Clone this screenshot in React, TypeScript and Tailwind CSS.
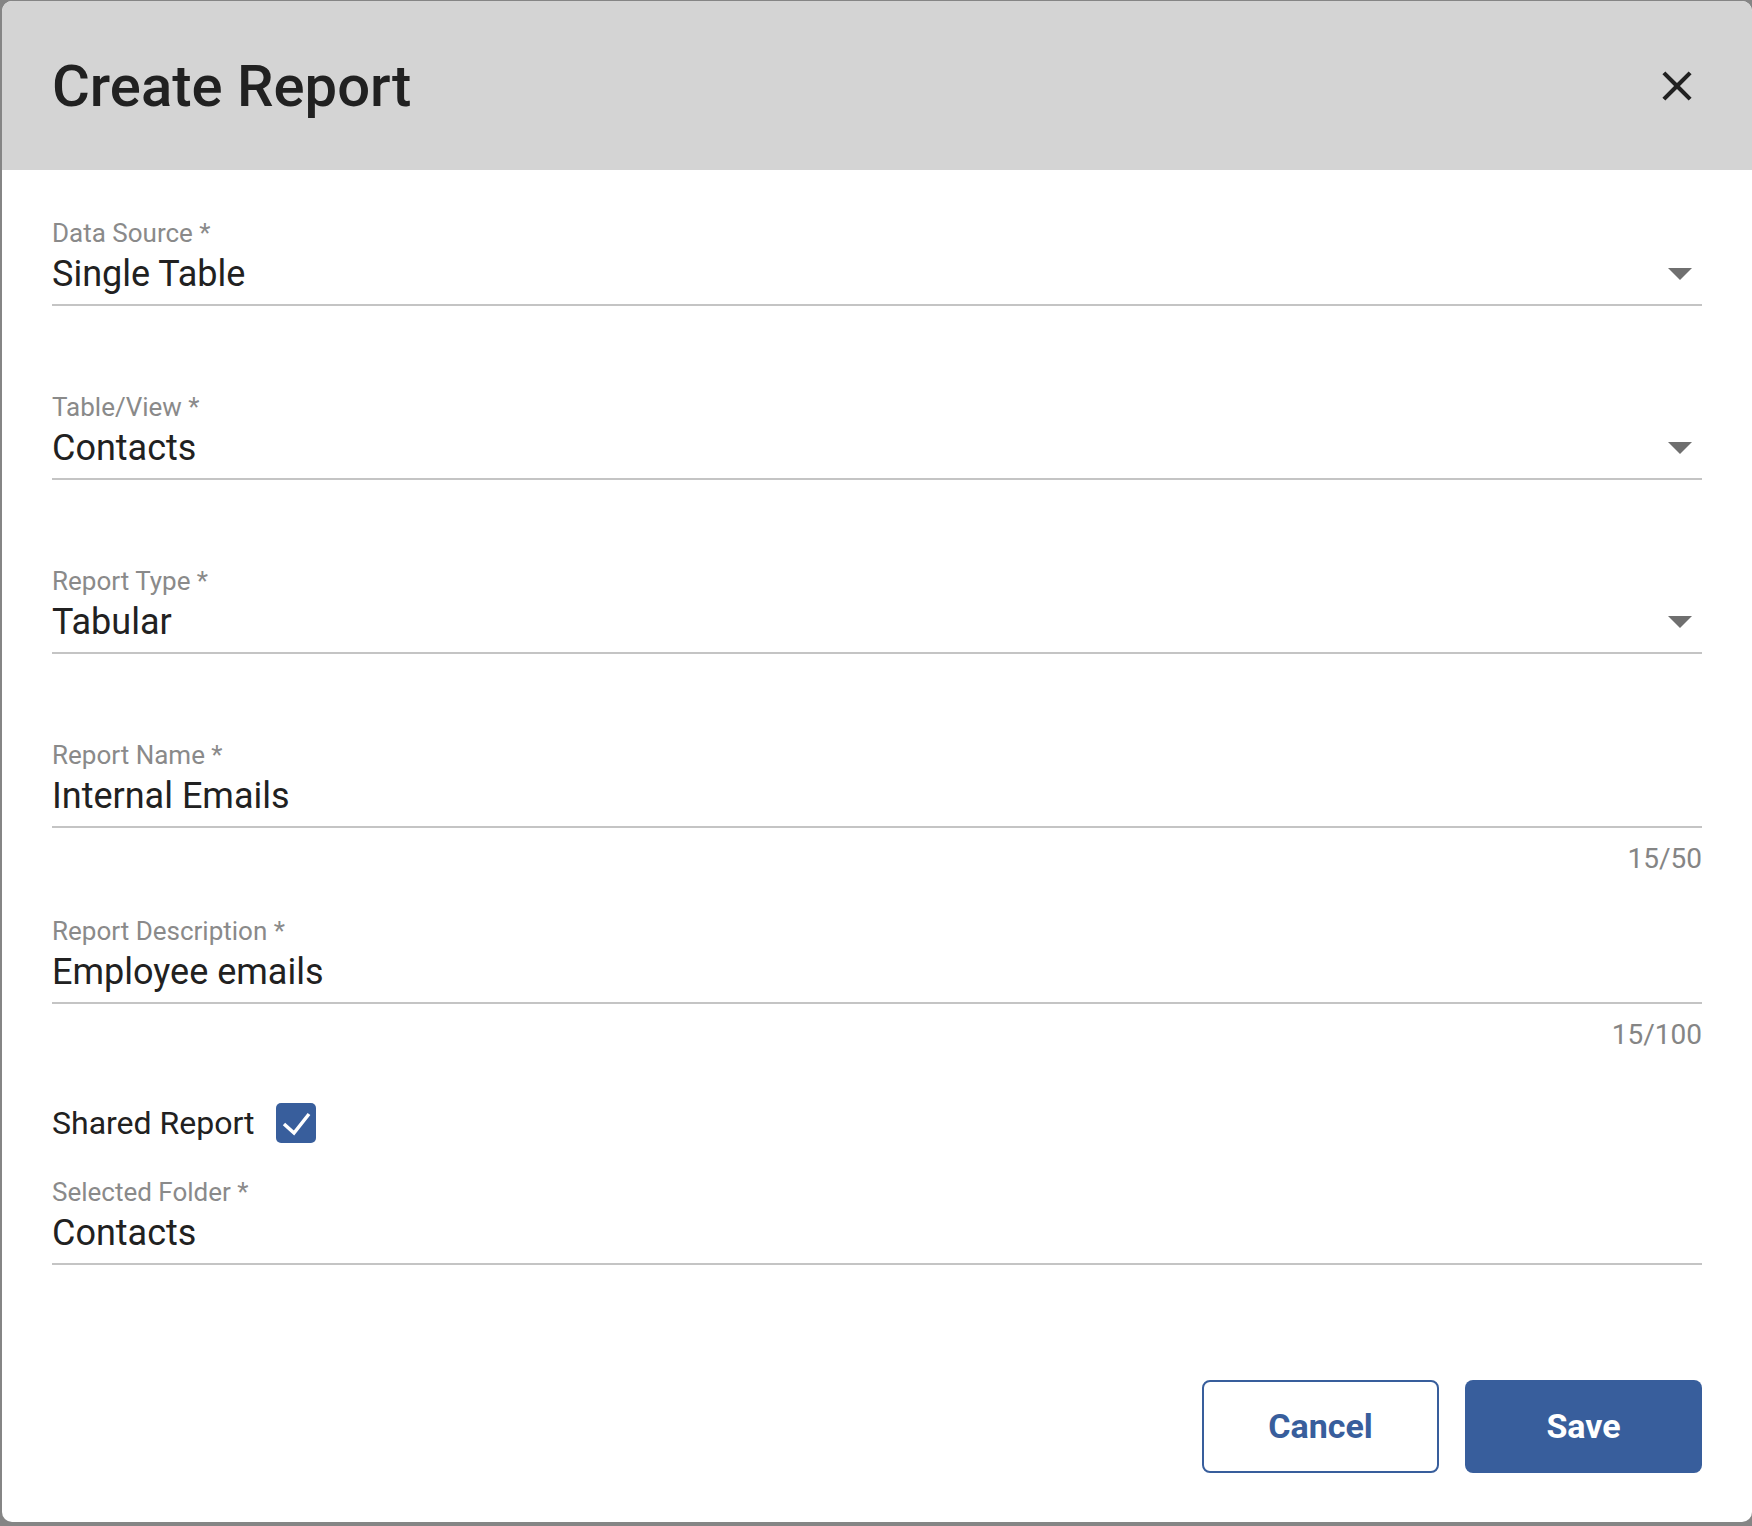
import React from "react";

function DropArrow() {
  return (
    <svg width="24" height="12" viewBox="0 0 24 12" className="shrink-0">
      <path d="M0 0 L24 0 L12 12 Z" fill="#6f6f6f" />
    </svg>
  );
}

function Field({
  label,
  value,
  select = false,
  className = "",
}: {
  label: string;
  value: string;
  select?: boolean;
  className?: string;
}) {
  return (
    <div className={`border-b-2 border-[#c4c4c4] pb-[8px] ${className}`}>
      <div className="h-[30px] text-[26px] leading-[30px] text-[#8a8a8a]">{label}</div>
      <div className="mt-[4px] flex h-[44px] items-center justify-between pr-[10px]">
        <span className="text-[36px] leading-[44px] text-[#212121]">{value}</span>
        {select && <DropArrow />}
      </div>
    </div>
  );
}

function Counter({ text }: { text: string }) {
  return (
    <div className="mt-[15px] h-[32px] text-right text-[28px] leading-[32px] text-[#858585]">
      {text}
    </div>
  );
}

export default function App() {
  return (
    <div className="h-[1526px] w-[1752px] overflow-hidden bg-[#858585] pl-[2px] pt-[1px] font-['Roboto',sans-serif]">
      <div className="flex h-[1521px] w-[1750px] flex-col overflow-hidden rounded-[10px] bg-white">
        {/* header */}
        <div className="flex h-[169px] shrink-0 items-center justify-between bg-[#d4d4d4] pl-[50px] pr-[50px]">
          <h1 className="text-[58px] font-medium leading-none text-[#212121]">Create Report</h1>
          <button className="text-[#212121]">
            <svg width="50" height="50" viewBox="0 0 24 24" fill="currentColor">
              <path d="M19 6.41 17.59 5 12 10.59 6.41 5 5 6.41 10.59 12 5 17.59 6.41 19 12 13.41 17.59 19 19 17.59 13.41 12z" />
            </svg>
          </button>
        </div>

        {/* form */}
        <div className="px-[50px] pt-[48px]">
          <Field label="Data Source *" value="Single Table" select />
          <Field label="Table/View *" value="Contacts" select className="mt-[86px]" />
          <Field label="Report Type *" value="Tabular" select className="mt-[86px]" />
          <Field label="Report Name *" value="Internal Emails" className="mt-[86px]" />
          <Counter text="15/50" />
          <Field label="Report Description *" value="Employee emails" className="mt-[41px]" />
          <Counter text="15/100" />

          <div className="mt-[52px] flex h-[40px] items-center gap-[21px]">
            <span className="text-[32px] leading-[40px] text-[#212121]">Shared Report</span>
            <div className="flex h-[40px] w-[40px] items-center justify-center rounded-[5px] bg-[#385e9c]">
              <svg width="40" height="40" viewBox="0 0 40 40">
                <path d="M8 21 L18 30 L33 11" fill="none" stroke="white" strokeWidth="3.5" />
              </svg>
            </div>
          </div>

          <Field label="Selected Folder *" value="Contacts" className="mt-[34px]" />

          <div className="mt-[115px] flex justify-end gap-[26px]">
            <button className="h-[93px] w-[237px] rounded-[8px] border-2 border-[#385e9c] bg-white text-[34px] font-bold text-[#385e9c]">
              Cancel
            </button>
            <button className="h-[93px] w-[237px] rounded-[8px] bg-[#385e9c] text-[34px] font-bold text-white">
              Save
            </button>
          </div>
        </div>
      </div>
    </div>
  );
}
